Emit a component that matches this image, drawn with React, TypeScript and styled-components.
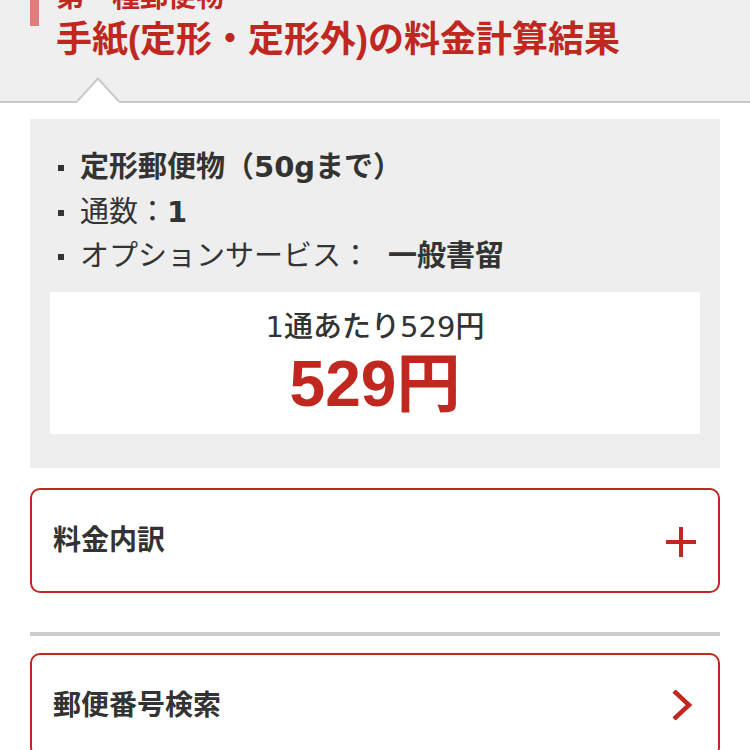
import React from "react";
import styled, { createGlobalStyle } from "styled-components";

const RED = "#c0281f";
const TEXT = "#333333";

const Global = createGlobalStyle`
  html, body { margin: 0; padding: 0; background: #fff; }
  body {
    font-family: "Liberation Sans", "Noto Sans CJK JP", sans-serif;
    color: ${TEXT};
    overflow: hidden;
  }
  * { box-sizing: border-box; }
`;

const Page = styled.div`
  width: 750px;
`;

const Header = styled.header`
  position: relative;
  margin-top: -16px;
  background: #efefef;
  border-bottom: 2px solid #c9c9c9;
  padding: 0 30px 43px;
`;

const Category = styled.div`
  border-left: 9px solid #e27d7b;
  padding: 0 0 14px 17px;
  font-size: 28px;
  line-height: 1;
  font-weight: 700;
  color: ${RED};
`;

const Title = styled.h1`
  margin: -4px 0 0 26px;
  font-size: 36px;
  line-height: 1;
  font-weight: 700;
  color: ${RED};
`;

const Notch = styled.svg`
  position: absolute;
  left: 77px;
  bottom: -2px;
  width: 42px;
  height: 26px;
  display: block;
`;

const Main = styled.main`
  padding: 16px 30px 0;
`;

const Summary = styled.section`
  background: #eeeeee;
  padding: 26px 20px 34px;
`;

const Specs = styled.ul`
  list-style: none;
  margin: 0 0 13px;
  padding: 0 0 0 8px;
  font-family: "DejaVu Sans", "Noto Sans CJK JP", sans-serif;
  font-size: 29px;
  line-height: 44.5px;
`;

const Spec = styled.li`
  display: flex;
  align-items: center;
  &::before {
    content: "";
    flex: none;
    width: 6px;
    height: 6px;
    background: ${TEXT};
    margin: 2px 16px 0 0;
  }
`;

const Strong = styled.span<{ $gap?: number }>`
  font-weight: 700;
  margin-left: ${(p) => p.$gap ?? 0}px;
`;

const PriceBox = styled.div`
  background: #fff;
  padding: 15px 0 13px;
  text-align: center;
`;

const PerUnit = styled.p`
  margin: 0;
  font-family: "DejaVu Sans", "Noto Sans CJK JP", sans-serif;
  font-size: 29px;
  line-height: 40px;
  font-weight: 500;
`;

const Total = styled.p`
  margin: 0;
  font-size: 64px;
  line-height: 74px;
  font-weight: 700;
  color: ${RED};
`;

const Card = styled.a<{ $top: number }>`
  display: flex;
  align-items: center;
  justify-content: space-between;
  height: 105px;
  margin-top: ${(p) => p.$top}px;
  padding: 0 22px 0 21px;
  border: 2px solid ${RED};
  border-radius: 10px;
  color: ${TEXT};
  text-decoration: none;
  font-size: 28px;
  font-weight: 600;
  line-height: 1.4;
`;

const Label = styled.span`
  padding-top: 2px;
`;

const Icon = styled.svg<{ $dy?: number }>`
  width: 30px;
  height: 30px;
  flex: none;
  display: block;
  margin-top: ${(p) => p.$dy ?? 0}px;
`;

const Divider = styled.hr`
  margin: 39px 0 0;
  border: 0;
  height: 4px;
  background: #cccccc;
`;

export default function App() {
  return (
    <Page>
      <Global />
      <Header>
        <Category>第一種郵便物</Category>
        <Title>手紙(定形・定形外)の料金計算結果</Title>
        <Notch viewBox="0 0 42 26">
          <polygon points="-1,26 21,2 43,26" fill="#fff" />
          <polyline
            points="0,24.5 21,1.5 42,24.5"
            fill="none"
            stroke="#c9c9c9"
            strokeWidth="2"
          />
        </Notch>
      </Header>
      <Main>
        <Summary>
          <Specs>
            <Spec>
              <Strong>定形郵便物（50gまで）</Strong>
            </Spec>
            <Spec>
              通数：<Strong>1</Strong>
            </Spec>
            <Spec>
              オプションサービス：<Strong $gap={18}>一般書留</Strong>
            </Spec>
          </Specs>
          <PriceBox>
            <PerUnit>1通あたり529円</PerUnit>
            <Total>529円</Total>
          </PriceBox>
        </Summary>
        <Card $top={20} href="#">
          <Label>料金内訳</Label>
          <Icon viewBox="0 0 30 30" $dy={4}>
            <path d="M0 15 H30 M15 0 V30" stroke={RED} strokeWidth="4" fill="none" />
          </Icon>
        </Card>
        <Divider />
        <Card $top={17} href="#">
          <Label>郵便番号検索</Label>
          <Icon viewBox="0 0 30 30">
            <polyline
              points="8,1 23,15 8,29"
              stroke={RED}
              strokeWidth="4.5"
              fill="none"
              strokeLinejoin="miter"
            />
          </Icon>
        </Card>
      </Main>
    </Page>
  );
}
